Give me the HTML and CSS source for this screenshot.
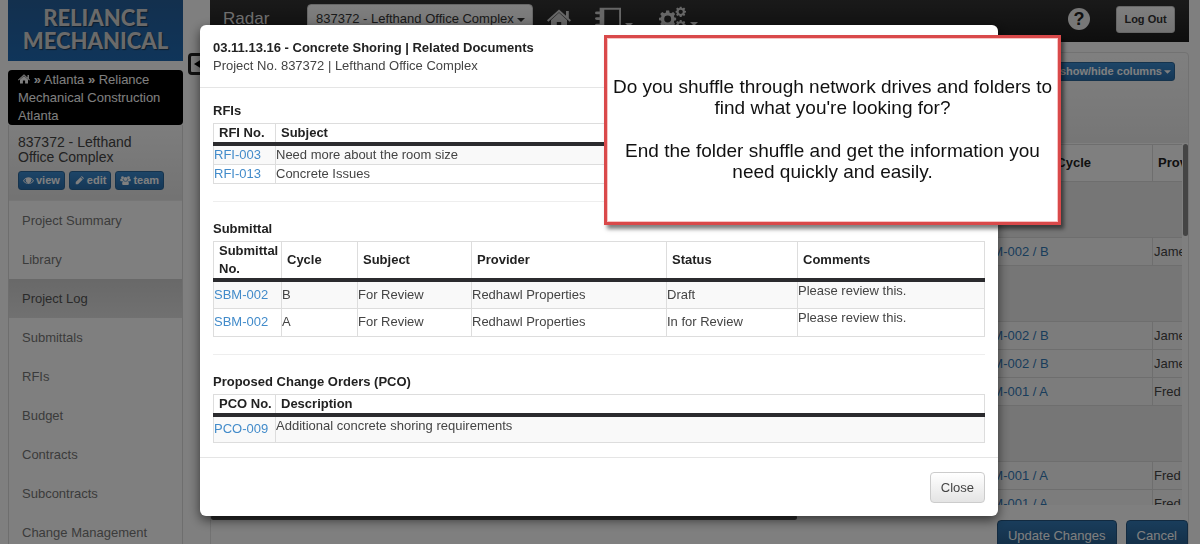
FILE: index.html
```html
<!DOCTYPE html>
<html lang="en">
<head>
<meta charset="utf-8">
<title>Radar - Project Log</title>
<link rel="stylesheet" href="styles.css">
</head>
<body>
<svg class="defs" aria-hidden="true">
  <symbol id="home" viewBox="0 0 24 20"><path d="M12 3.8 4 11v8.2h5.800V13h4.400v6.200H20V11z"/><path d="M12 .6 19 6.800V2h2.800v7.300L24 11.300l-1.300 1.500L12 3.200 1.300 12.800 0 11.300z"/></symbol>
  <symbol id="caret" viewBox="0 0 8 4"><path d="M0 0h8L4 4z"/></symbol>
  <symbol id="gear" viewBox="0 0 20 20"><path fill-rule="evenodd" d="M8.300 0h3.400l.5 2.700 1.800.8L16.300 2l2.300 2.300-1.500 2.300.7 1.700 2.200.4v2.600l-2.200.5-.7 1.700 1.500 2.200-2.300 2.400-2.300-1.500-1.800.7-.5 2.700H8.300l-.5-2.700-1.800-.7-2.300 1.500-2.300-2.400 1.500-2.200-.7-1.700L0 11.300V8.700l2.200-.4.7-1.700L1.400 4.300 3.700 2 6 3.500l1.800-.8zM10 6a4 4 0 1 0 0 8 4 4 0 0 0 0-8z"/></symbol>
</svg>

<div class="page">
  <aside class="sidebar">
    <a class="logo" href="#">RELIANCE<br>MECHANICAL</a>
    <nav class="crumbs" aria-label="Breadcrumb">
      <a href="#" aria-label="Home"><svg class="crumb-home"><use href="#home"/></svg></a> <b>»</b> <a href="#">Atlanta</a> <b>»</b> <a href="#">Reliance Mechanical Construction Atlanta</a>
    </nav>
    <div class="project">
      <div class="project-head">
        <h2>837372 - Lefthand Office Complex</h2>
        <div class="actions">
          <button class="btn-mini"><svg viewBox="0 0 14 10"><path fill-rule="evenodd" d="M0 5.300C2 2 4.500.8 7 .8s5 1.200 7 4.500C12 8.300 9.500 9.500 7 9.500S2 8.300 0 5.300zm1.300 0C3 7.700 5 8.500 7 8.500s4-.8 5.700-3.200A7 7 0 0 0 10 2.700a3.600 3.600 0 1 1-6 0 7 7 0 0 0-2.700 2.600z"/></svg>view</button>
          <button class="btn-mini"><svg viewBox="0 0 12 12"><path d="m1 8 6.300-6.200 3 3L4 11H1zM8 1l1-1 3 3-1 1z"/></svg>edit</button>
          <button class="btn-mini"><svg viewBox="0 0 14 12"><circle cx="3" cy="2.300" r="1.900"/><circle cx="11" cy="2.300" r="1.900"/><circle cx="7" cy="4" r="2.700"/><path d="M0 5q0-1.500 1.500-1.200L4 5q0 1.200.7 2H1Q0 7 0 6zM14 5q0-1.500-1.500-1.200L10 5q0 1.200-.7 2H13q1 0 1-1zM2.500 10q0-3.300 2-3.400 2.500 1.500 5 0 2 .1 2 3.400 0 2-1.500 2H4q-1.500 0-1.500-2z"/></svg>team</button>
        </div>
      </div>
      <ul class="menu">
        <li><a href="#">Project Summary</a></li>
        <li><a href="#">Library</a></li>
        <li><a class="active" href="#">Project Log</a></li>
        <li><a href="#">Submittals</a></li>
        <li><a href="#">RFIs</a></li>
        <li><a href="#">Budget</a></li>
        <li><a href="#">Contracts</a></li>
        <li><a href="#">Subcontracts</a></li>
        <li><a href="#">Change Management</a></li>
      </ul>
    </div>
  </aside>

  <button class="collapse" aria-label="Collapse menu"><svg viewBox="0 0 8 10"><path d="M8 0v10L0 5z"/></svg></button>

  <main class="main">
    <header class="navbar">
      <span class="brand">Radar</span>
      <span class="picker">
        <select aria-label="Project"><option>837372 - Lefthand Office Complex</option></select>
        <svg><use href="#caret"/></svg>
      </span>
      <a class="nav-icon" href="#" aria-label="Home"><svg class="i-home"><use href="#home"/></svg></a>
      <a class="nav-icon" href="#" aria-label="Directory"><svg class="i-book" viewBox="0 0 28 24"><path fill-rule="evenodd" d="M5 0h23v24H5v-4H2q-2 0-2-1.500T2 17h3v-4H2q-2 0-2-1.500T2 10h3V7H2Q0 7 0 5.500T2 4h3zm5 2v20h16V2z"/></svg><svg class="i-caret"><use href="#caret"/></svg></a>
      <a class="nav-icon" href="#" aria-label="Settings"><svg class="i-gears" viewBox="0 0 28 26"><use href="#gear" x="0" y="4" width="18" height="18"/><use href="#gear" x="17" y="0" width="11" height="11"/><use href="#gear" x="17" y="14" width="11" height="11"/></svg><svg class="i-caret"><use href="#caret"/></svg></a>
      <a class="help" href="#" aria-label="Help">?</a>
      <button class="logout">Log Out</button>
    </header>

    <section class="panel">
      <div class="toolbar"><button class="btn-mini columns">show/hide columns <svg><use href="#caret"/></svg></button></div>
      <div class="grid-wrap">
        <div class="grid-clip">
          <table class="grid">
            <colgroup><col><col class="c-cycle"><col class="c-prov"></colgroup>
            <thead><tr><th></th><th>Submittals / Cycle</th><th>Provider</th></tr></thead>
            <tbody>
              <tr class="group"><td colspan="3"></td></tr>
              <tr><td></td><td><a href="#">SBM-002 / B</a></td><td>James</td></tr>
              <tr class="group"><td colspan="3"></td></tr>
              <tr><td></td><td><a href="#">SBM-002 / B</a></td><td>James</td></tr>
              <tr><td></td><td><a href="#">SBM-002 / B</a></td><td>James</td></tr>
              <tr><td></td><td><a href="#">SBM-001 / A</a></td><td>Fred</td></tr>
              <tr class="group"><td colspan="3"></td></tr>
              <tr><td></td><td><a href="#">SBM-001 / A</a></td><td>Fred</td></tr>
              <tr><td></td><td><a href="#">SBM-001 / A</a></td><td>Fred</td></tr>
            </tbody>
          </table>
        </div>
        <div class="v-thumb"></div>
      </div>
      <div class="h-thumb"></div>
      <div class="form-actions"><button class="btn-main">Update Changes</button><button class="btn-main">Cancel</button></div>
    </section>
  </main>
</div>

<div class="backdrop">
  <div class="modal" role="dialog" aria-labelledby="modal-title">
    <div class="modal-head">
      <h1 id="modal-title">03.11.13.16 - Concrete Shoring | Related Documents</h1>
      <p>Project No. 837372 | Lefthand Office Complex</p>
    </div>
    <div class="modal-body">
      <h3>RFIs</h3>
      <table class="docs">
        <colgroup><col class="c-no"><col></colgroup>
        <thead><tr><th>RFI No.</th><th>Subject</th></tr></thead>
        <tbody>
          <tr><td><a href="#">RFI-003</a></td><td>Need more about the room size</td></tr>
          <tr><td><a href="#">RFI-013</a></td><td>Concrete Issues</td></tr>
        </tbody>
      </table>
      <hr>
      <h3>Submittal</h3>
      <table class="docs tall">
        <colgroup><col class="s-no"><col class="s-cycle"><col class="s-subject"><col class="s-provider"><col class="s-status"><col></colgroup>
        <thead><tr><th>Submittal No.</th><th>Cycle</th><th>Subject</th><th>Provider</th><th>Status</th><th>Comments</th></tr></thead>
        <tbody>
          <tr><td><a href="#">SBM-002</a></td><td>B</td><td>For Review</td><td>Redhawl Properties</td><td>Draft</td><td class="note">Please review this.</td></tr>
          <tr><td><a href="#">SBM-002</a></td><td>A</td><td>For Review</td><td>Redhawl Properties</td><td>In for Review</td><td class="note">Please review this.</td></tr>
        </tbody>
      </table>
      <hr>
      <h3>Proposed Change Orders (PCO)</h3>
      <table class="docs tall">
        <colgroup><col class="c-no"><col></colgroup>
        <thead><tr><th>PCO No.</th><th>Description</th></tr></thead>
        <tbody><tr><td><a href="#">PCO-009</a></td><td class="note">Additional concrete shoring requirements</td></tr></tbody>
      </table>
    </div>
    <div class="modal-foot"><button class="close">Close</button></div>
    <div class="callout">
      <p>Do you shuffle through network drives and folders to find what you're looking for?</p>
      <p>End the folder shuffle and get the information you need quickly and easily.</p>
    </div>
  </div>
</div>
</body>
</html>
```

FILE: styles.css
```css
* { box-sizing: border-box; }
body { margin: 0; height: 100vh; overflow: hidden; background: #fff; color: #444; font: 13px/18px "Liberation Sans", Arial, sans-serif; }
h1, h2, h3, p, ul { margin: 0; padding: 0; }
ul { list-style: none; }
a { color: #337ab7; text-decoration: none; }
button, select { font: inherit; cursor: pointer; }
svg { fill: currentColor; }
.defs { position: absolute; width: 0; height: 0; }

.page { display: flex; align-items: flex-start; height: 100vh; overflow: hidden; padding: 0 11px 0 8px; }

/* Sidebar */
.sidebar { flex: none; width: 175px; }
.logo { display: block; height: 61px; padding-top: 6px; background: linear-gradient(#26609c, #1f6ab4); color: #d4d4d4; font: 900 22px/23px Lato, sans-serif; text-align: center; text-shadow: 1px 1px 1px #1a3a5c; }
.crumbs { margin-top: 9px; padding: 1px 10px 0; height: 55px; background: #000; border-radius: 4px; color: #fff; }
.crumbs a { color: #fff; }
.crumb-home { width: 12px; height: 10px; }
.project { border: 1px solid #ddd; border-top: 0; }
.project-head { height: 76px; padding: 10px 9px 0; background: linear-gradient(#fbfbfb, #e6e6e6); border-bottom: 1px solid #ececec; }
.project-head h2 { padding-right: 24px; font-weight: normal; font-size: 14px; line-height: 15px; }
.actions { display: flex; gap: 4px; margin-top: 6px; }
.btn-mini { display: flex; align-items: center; gap: 2px; height: 19px; padding: 0 4px; border: 1px solid #2b669a; border-radius: 3px; background: linear-gradient(#3b8bd0, #2a6fae); color: #fff; font-weight: bold; font-size: 11px; line-height: 17px; white-space: nowrap; }
.btn-mini svg { width: 11px; height: 9px; }
.menu a { display: block; height: 39px; padding: 11px 13px; color: #777; }
.menu .active { background: linear-gradient(#d2d2d2, #e2e2e2); color: #555; }

.collapse { flex: none; width: 22px; height: 22px; margin: 53px 0 0 5px; padding: 0 0 0 3px; border: 3px solid #222; border-radius: 4px; background: #fff; color: #000; line-height: 0; text-align: left; }
.collapse svg { width: 8px; height: 10px; }

/* Main area */
.main { flex: 1; min-width: 0; }
.navbar { display: flex; align-items: center; height: 42px; padding: 0 14px 4px 13px; background: linear-gradient(#343434, #1c1c1c); color: #ddd; }
.brand { width: 84px; font-size: 17px; }
.picker { position: relative; width: 226px; margin-right: 14px; }
.picker select { width: 100%; height: 30px; padding: 0 0 0 8px; border: 1px solid #ccc; border-radius: 4px; background: linear-gradient(#fff, #e6e6e6); color: #333; appearance: none; line-height: 18px; }
.picker svg { position: absolute; right: 8px; top: 14px; width: 8px; height: 4px; color: #333; pointer-events: none; }
.nav-icon { display: flex; align-items: flex-start; color: #ccc; }
.i-home { width: 24px; height: 20px; }
.i-book { width: 26px; height: 24px; margin-left: 24px; }
.i-gears { width: 27px; height: 26px; margin-left: 26px; }
.i-caret { width: 8px; height: 4px; margin: 16px 0 0 4px; }
.help { width: 22px; height: 22px; margin-left: auto; border-radius: 50%; background: #eee; color: #222; font: bold 18px/22px "Liberation Sans", Arial, sans-serif; text-align: center; }
.logout { width: 59px; height: 27px; margin-left: 26px; padding: 0; border: 1px solid #ccc; border-radius: 3px; background: linear-gradient(#fff, #e6e6e6); color: #333; font-weight: bold; font-size: 11px; }

.panel { margin-top: 10px; border: 1px solid #e4e4e4; border-radius: 4px; background: linear-gradient(#fff, #ececec 90px, #fff 90px); }
.toolbar { display: flex; justify-content: flex-end; height: 91px; padding: 9px 13px 0; }
.columns { gap: 2px; padding: 0 3px; }
.columns svg { width: 7px; height: 4px; }
.grid-wrap { display: flex; gap: 1px; }
.grid-clip { flex: 1; min-width: 0; height: 361px; overflow: hidden; }
.grid { width: calc(100% + 80px); table-layout: fixed; border-collapse: collapse; }
.c-cycle { width: 179px; }
.c-prov { width: 109px; }
.grid th { height: 37px; padding: 0 5px; border: 1px solid #ddd; color: #222; text-align: left; }
.grid td { height: 28px; padding: 0 1px; border: 1px solid #ddd; }
.grid tbody tr { background: #f9f9f9; }
.grid .group td { height: 56px; background: #ededed; }
.v-thumb { width: 5px; height: 92px; border-radius: 3px; background: #888; }
.h-thumb { width: 60%; height: 5px; margin-top: 10px; border-radius: 3px; background: #555; }
.form-actions { display: flex; justify-content: flex-end; gap: 9px; }
.btn-main { height: 32px; padding: 0 10px; border: 1px solid #245580; border-radius: 4px; background: linear-gradient(#337ab7, #265a88); color: #fff; }

/* Modal */
.backdrop { position: fixed; inset: 0; display: flex; justify-content: center; align-items: flex-start; padding: 25px 2px 0 0; background: rgba(0, 0, 0, .5); }
.modal { position: relative; width: 798px; max-width: 100%; border-radius: 6px; background: #fff; box-shadow: 0 4px 12px rgba(0, 0, 0, .6); }
.modal-head { padding: 14px 13px 12px; border-bottom: 1px solid #e5e5e5; }
.modal-head h1, .modal h3 { color: #222; font-weight: bold; font-size: 13px; line-height: 18px; }
.modal-body { padding: 14px 13px; }
.modal h3 { margin-bottom: 3px; }
.modal hr { margin: 17px 0 18px; border: 0; border-top: 1px solid #eee; }
.docs { width: 100%; table-layout: fixed; border-collapse: collapse; }
.docs th, .docs td { border: 1px solid #ddd; text-align: left; }
.docs th { padding: 0 0 0 5px; border-bottom: 4px solid #2b2b2e; color: #222; }
.docs td { padding: 0; }
.docs tbody tr:nth-child(odd) { background: #f9f9f9; }
.tall td { height: 28px; }
.docs .note { vertical-align: top; }
.modal a { color: #428bca; }
.c-no { width: 62px; }
.s-no { width: 68px; }
.s-cycle { width: 76px; }
.s-subject { width: 114px; }
.s-provider { width: 195px; }
.s-status { width: 131px; }
.modal-foot { display: flex; justify-content: flex-end; padding: 14px 13px 13px; border-top: 1px solid #e5e5e5; }
.close { height: 31px; padding: 0 10px; border: 1px solid #ccc; border-radius: 4px; background: linear-gradient(#fff, #e4e4e4); color: #444; }
.callout { position: absolute; top: 10px; left: 404px; width: 457px; padding: 38px 0 40px; border: 3px solid #d9494a; background: #fff; box-shadow: inset 0 0 0 1px #f7c4c4, 3px 4px 4px rgba(0, 0, 0, .5); color: #111; font-size: 19px; line-height: 21px; text-align: center; }
.callout p { padding: 0 4px; }
.callout p + p { margin-top: 22px; }
```
